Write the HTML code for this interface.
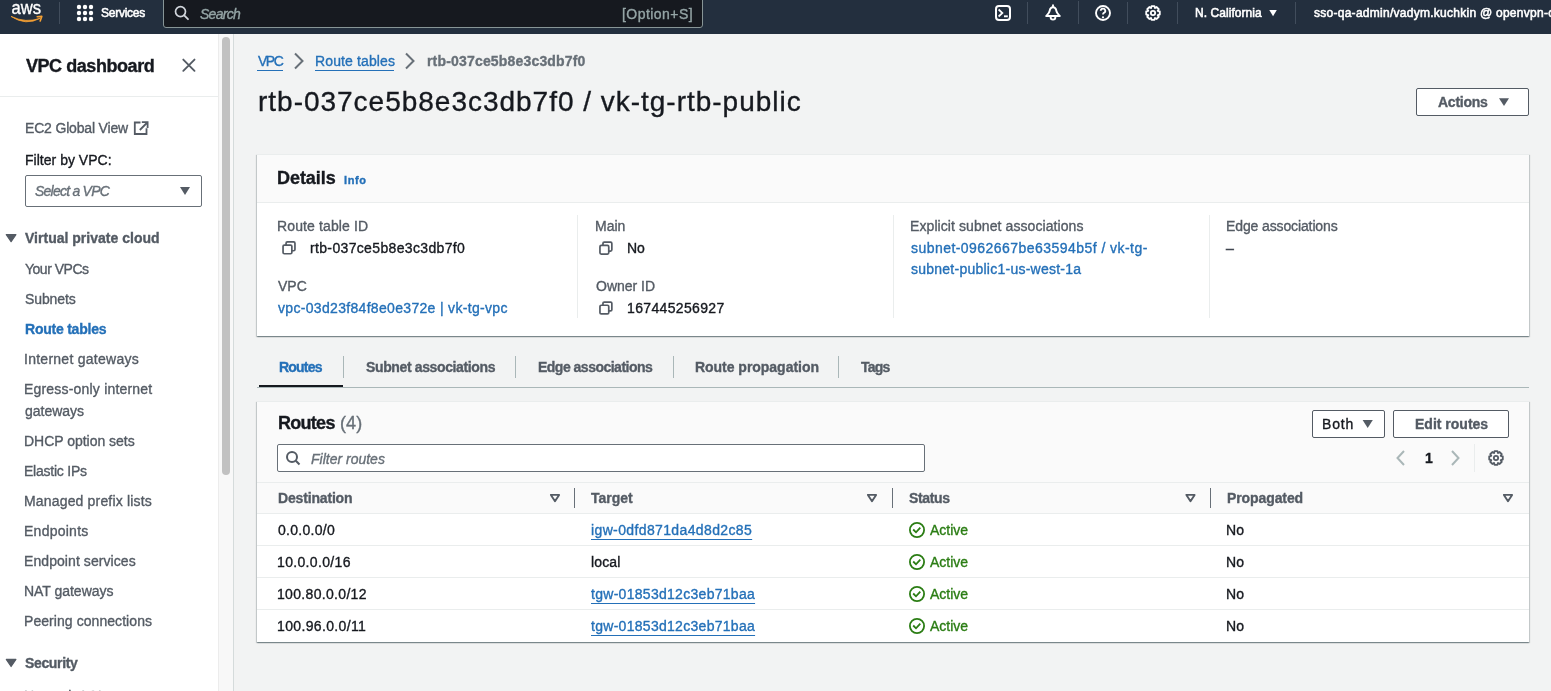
<!DOCTYPE html>
<html><head><meta charset="utf-8">
<style>
html,body{margin:0;padding:0;width:1551px;height:691px;overflow:hidden;background:#f2f3f3;font-family:"Liberation Sans",sans-serif;}
.t{position:absolute;line-height:0;white-space:nowrap;will-change:transform;-webkit-text-stroke:0.35px currentColor;}
.a{position:absolute;box-sizing:border-box;}
svg{position:absolute;overflow:visible;}
</style></head><body>
<!-- header -->
<div class="a" style="left:0;top:0;width:1551px;height:34px;background:#232f3e"></div>
<!-- aws logo -->
<svg style="left:0;top:0;will-change:transform" width="60" height="34">
  <text x="11.6" y="14" font-family="Liberation Sans" font-size="18.6" fill="#fff" stroke="#fff" stroke-width="0.35" textLength="29.6" lengthAdjust="spacingAndGlyphs">aws</text>
  <path d="M11 16.4 Q26 26.2 40.2 18.3 Q26 23.4 11 16.4 Z" fill="#f5a033" stroke="#f5a033" stroke-width="0.8" stroke-linejoin="round"/>
  <path d="M37.2 16.8 L41.8 16.4 L40.2 20.9" stroke="#f5a033" stroke-width="1.6" fill="none" stroke-linecap="round" stroke-linejoin="round"/>
</svg>
<div class="a" style="left:59px;top:2px;width:1px;height:22px;background:#414d5c"></div>
<!-- grid dots -->
<svg style="left:0;top:0" width="100" height="34" fill="#fff">
  <circle cx="79" cy="7" r="2.2"/><circle cx="85" cy="7" r="2.2"/><circle cx="91" cy="7" r="2.2"/>
  <circle cx="79" cy="13" r="2.2"/><circle cx="85" cy="13" r="2.2"/><circle cx="91" cy="13" r="2.2"/>
  <circle cx="79" cy="19" r="2.2"/><circle cx="85" cy="19" r="2.2"/><circle cx="91" cy="19" r="2.2"/>
</svg>
<!-- search -->
<div class="a" style="left:163px;top:-6px;width:540px;height:34px;background:#16191f;border:1px solid #879596;border-radius:3px"></div>
<svg style="left:0;top:0" width="200" height="34">
  <circle cx="180.5" cy="11.6" r="5" stroke="#d1d5db" stroke-width="1.7" fill="none"/>
  <path d="M184.2 15.3 L188 19.2" stroke="#d1d5db" stroke-width="1.8" stroke-linecap="round"/>
</svg>
<!-- header right icons -->
<svg style="left:0;top:0" width="1300" height="34" fill="none" stroke="#fff" stroke-width="2">
  <rect x="996" y="6" width="14" height="14" rx="3"/>
  <path d="M998.6 9.5 L1002.4 13 L998.6 16.5" stroke-width="1.7"/>
  <path d="M1004 16.3 L1007.8 16.3" stroke-width="1.9"/>
  <!-- bell -->
  <path d="M1053 7.2 C1050.8 7.2 1049.9 9 1049.6 11 C1049.3 13 1047.8 14.3 1046.2 16 L1059.8 16 C1058.2 14.3 1056.7 13 1056.4 11 C1056.1 9 1055.2 7.2 1053 7.2 Z" stroke-width="1.9" stroke-linejoin="round"/>
  <path d="M1053 5.2 L1053 7" stroke-width="1.9" stroke-linecap="round"/>
  <path d="M1050.6 17 A2.4 2.6 0 0 0 1055.4 17" stroke-width="1.9"/>
  <!-- help -->
  <circle cx="1103" cy="13" r="7" stroke-width="1.9"/>
  <path d="M1100.7 10.8 A2.3 2.2 0 1 1 1103.9 12.9 C1103.2 13.3 1103 13.8 1103 14.6" stroke-width="1.8"/>
  <circle cx="1103" cy="17.3" r="1.1" fill="#fff" stroke="none"/>
  <!-- gear -->
  <g transform="translate(1153,13) scale(0.9) translate(-1153,-13)">
  <circle cx="1153" cy="13" r="2.4" stroke-width="2"/>
  <path d="M1151.4 5.4 L1154.6 5.4 L1155.2 7.5 L1157.1 6.4 L1159.4 8.7 L1158.3 10.6 L1160.5 11.3 L1160.5 14.7 L1158.3 15.4 L1159.4 17.3 L1157.1 19.6 L1155.2 18.5 L1154.6 20.6 L1151.4 20.6 L1150.8 18.5 L1148.9 19.6 L1146.6 17.3 L1147.7 15.4 L1145.5 14.7 L1145.5 11.3 L1147.7 10.6 L1146.6 8.7 L1148.9 6.4 L1150.8 7.5 Z" stroke-width="2.1" stroke-linejoin="round"/>
</g>
</svg>
<div class="a" style="left:1027px;top:2px;width:1px;height:22px;background:#414d5c"></div>
<div class="a" style="left:1078px;top:1px;width:1px;height:23px;background:#414d5c"></div>
<div class="a" style="left:1127px;top:2px;width:1px;height:22px;background:#414d5c"></div>
<div class="a" style="left:1177px;top:2px;width:1px;height:22px;background:#414d5c"></div>
<div class="a" style="left:1295px;top:2px;width:1px;height:22px;background:#414d5c"></div>
<svg style="left:0;top:0" width="1300" height="34"><path d="M1269.3 10 L1276.8 10 L1273.05 16.2 Z" fill="#fff"/></svg>

<!-- sidebar -->
<div class="a" style="left:0;top:34px;width:218px;height:657px;background:#fff"></div>
<div class="a" style="left:0;top:96px;width:218px;height:1px;background:#eaeded"></div>
<!-- scrollbar -->
<div class="a" style="left:218px;top:34px;width:15px;height:657px;background:#f8f8f8;border-left:1px solid #ececec"></div>
<div class="a" style="left:222px;top:37px;width:8px;height:438px;background:#c1c1c1;border-radius:4px"></div>
<div class="a" style="left:233px;top:34px;width:1px;height:657px;background:#d5dbdb"></div>
<!-- close X -->
<svg style="left:0;top:0" width="220" height="100"><path d="M183.3 59.6 L194.5 70.8 M194.5 59.6 L183.3 70.8" stroke="#545b64" stroke-width="1.9" stroke-linecap="round"/></svg>
<!-- external link icon -->
<svg style="left:0;top:0" width="220" height="160" fill="none" stroke="#545b64" stroke-width="1.8">
  <path d="M140.5 122.5 L134.8 122.5 L134.8 134 L146.5 134 L146.5 128.3"/>
  <path d="M141.8 122.2 L147.6 122.2 L147.6 128 M147.3 122.5 L139.8 130"/>
</svg>
<!-- select -->
<div class="a" style="left:25px;top:175px;width:177px;height:32px;background:#fff;border:1px solid #687078;border-radius:2px"></div>
<svg style="left:0;top:0" width="220" height="260" fill="#545b64">
  <path d="M180 187 L190 187 L185 195 Z"/>
  <path d="M6.3 234.6 L15.9 234.6 L11.1 241.7 Z" stroke="#545b64" stroke-width="1.2" stroke-linejoin="round"/>
</svg>
<svg style="left:0;top:0" width="220" height="700" fill="#545b64"><path d="M6.3 659.4 L15.9 659.4 L11.1 666.5 Z" stroke="#545b64" stroke-width="1.2" stroke-linejoin="round"/></svg>

<!-- breadcrumb chevrons -->
<svg style="left:0;top:0" width="500" height="80" fill="none" stroke="#687078" stroke-width="2">
  <path d="M295 53.5 L302.5 61 L295 68.5"/>
  <path d="M406 53.5 L413.5 61 L406 68.5"/>
</svg>
<div class="a" style="left:257px;top:70px;width:26px;height:1px;background:#2470b8"></div>
<div class="a" style="left:315px;top:70px;width:79px;height:1px;background:#2470b8"></div>

<!-- actions button -->
<div class="a" style="left:1416px;top:88px;width:113px;height:28px;border:1px solid #545b64;border-radius:2px;background:#fff"></div>
<svg style="left:0;top:0" width="1551" height="120" fill="#545b64"><path d="M1499 98.3 L1509 98.3 L1504 106 Z"/></svg>

<!-- details container -->
<div class="a" style="left:257px;top:154px;width:1272px;height:182px;background:#fff;border-top:1px solid #eaeded;box-shadow:0 1px 1px 0 rgba(0,28,36,.3),1px 1px 1px 0 rgba(0,28,36,.15),-1px 1px 1px 0 rgba(0,28,36,.15)"></div>
<div class="a" style="left:257px;top:155px;width:1272px;height:48px;background:#fafafa;border-bottom:1px solid #eaeded"></div>
<div class="a" style="left:577px;top:215px;width:1px;height:103px;background:#eaeded"></div>
<div class="a" style="left:893px;top:215px;width:1px;height:103px;background:#eaeded"></div>
<div class="a" style="left:1209px;top:215px;width:1px;height:103px;background:#eaeded"></div>
<!-- copy icons -->
<svg style="left:0;top:0" width="800" height="340" fill="none" stroke="#545b64" stroke-width="1.7" stroke-linejoin="round">
  <g transform="translate(282.6,241)"><rect x="0.45" y="4.05" width="8.8" height="8.7" rx="1.3"/><path d="M3.45 4.05 V2.15 Q3.45 0.85 4.75 0.85 H11.05 Q12.35 0.85 12.35 2.15 V8.45 Q12.35 9.75 11.05 9.75 H9.25"/></g>
  <g transform="translate(599.5,241.3)"><rect x="0.45" y="4.05" width="8.8" height="8.7" rx="1.3"/><path d="M3.45 4.05 V2.15 Q3.45 0.85 4.75 0.85 H11.05 Q12.35 0.85 12.35 2.15 V8.45 Q12.35 9.75 11.05 9.75 H9.25"/></g>
  <g transform="translate(599.5,301.2)"><rect x="0.45" y="4.05" width="8.8" height="8.7" rx="1.3"/><path d="M3.45 4.05 V2.15 Q3.45 0.85 4.75 0.85 H11.05 Q12.35 0.85 12.35 2.15 V8.45 Q12.35 9.75 11.05 9.75 H9.25"/></g>
</svg>

<!-- tabs -->
<div class="a" style="left:257px;top:387px;width:1272px;height:1px;background:#aab7b8"></div>
<div class="a" style="left:259px;top:385px;width:84px;height:2px;background:#16191f"></div>
<div class="a" style="left:343px;top:356px;width:1px;height:22px;background:#aab7b8"></div>
<div class="a" style="left:515px;top:356px;width:1px;height:22px;background:#aab7b8"></div>
<div class="a" style="left:673px;top:356px;width:1px;height:22px;background:#aab7b8"></div>
<div class="a" style="left:838px;top:356px;width:1px;height:22px;background:#aab7b8"></div>

<!-- routes container -->
<div class="a" style="left:257px;top:401px;width:1272px;height:241px;background:#fafafa;border-top:1px solid #eaeded;box-shadow:0 1px 1px 0 rgba(0,28,36,.3),1px 1px 1px 0 rgba(0,28,36,.15),-1px 1px 1px 0 rgba(0,28,36,.15)"></div>
<div class="a" style="left:1312px;top:410px;width:73px;height:28px;border:1px solid #545b64;border-radius:2px;background:#fff"></div>
<div class="a" style="left:1393px;top:410px;width:116px;height:28px;border:1px solid #545b64;border-radius:2px;background:#fff"></div>
<svg style="left:0;top:0" width="1551" height="500" fill="#545b64"><path d="M1362.6 419.9 L1372.8 419.9 L1367.7 427.9 Z"/></svg>
<div class="a" style="left:277px;top:444px;width:648px;height:28px;border:1px solid #687078;border-radius:2px;background:#fff"></div>
<svg style="left:0;top:0" width="1551" height="500" fill="none" stroke="#545b64" stroke-width="2">
  <circle cx="292" cy="457" r="5"/><path d="M295.8 460.8 L299.5 464.5"/>
  <path d="M1404 451 L1397.5 458 L1404 465" stroke="#aab7b8"/>
  <path d="M1452 451 L1458.5 458 L1452 465" stroke="#aab7b8"/>
</svg>
<div class="a" style="left:1474px;top:444px;width:1px;height:28px;background:#eaeded"></div>
<svg style="left:0;top:0" width="1551" height="500" fill="none" stroke="#545b64">
  <g transform="translate(1496,458) scale(0.9) translate(-1496,-458)"><circle cx="1496" cy="458" r="2.4" stroke-width="2"/>
  <path d="M1494.4 450.4 L1497.6 450.4 L1498.2 452.5 L1500.1 451.4 L1502.4 453.7 L1501.3 455.6 L1503.5 456.3 L1503.5 459.7 L1501.3 460.4 L1502.4 462.3 L1500.1 464.6 L1498.2 463.5 L1497.6 465.6 L1494.4 465.6 L1493.8 463.5 L1491.9 464.6 L1489.6 462.3 L1490.7 460.4 L1488.5 459.7 L1488.5 456.3 L1490.7 455.6 L1489.6 453.7 L1491.9 451.4 L1493.8 452.5 Z" stroke-width="2.1" stroke-linejoin="round"/>
</g>
</svg>
<!-- table -->
<div class="a" style="left:257px;top:482px;width:1272px;height:1px;background:#eaeded"></div>
<div class="a" style="left:257px;top:513px;width:1272px;height:129px;background:#fff;border-top:1px solid #eaeded"></div>
<div class="a" style="left:257px;top:545px;width:1272px;height:1px;background:#eaeded"></div>
<div class="a" style="left:257px;top:577px;width:1272px;height:1px;background:#eaeded"></div>
<div class="a" style="left:257px;top:609px;width:1272px;height:1px;background:#eaeded"></div>
<div class="a" style="left:574px;top:488px;width:1px;height:20px;background:#687078"></div>
<div class="a" style="left:892px;top:488px;width:1px;height:20px;background:#687078"></div>
<div class="a" style="left:1210px;top:488px;width:1px;height:20px;background:#687078"></div>
<svg style="left:0;top:0" width="1551" height="700" fill="none" stroke="#545b64" stroke-width="1.9" stroke-linejoin="round">
  <path d="M550.9 494.9 L559.1 494.9 L555 501.2 Z"/>
  <path d="M867.9 494.9 L876.1 494.9 L872 501.2 Z"/>
  <path d="M1186.4 494.9 L1194.6 494.9 L1190.5 501.2 Z"/>
  <path d="M1503.9 494.9 L1512.1 494.9 L1508 501.2 Z"/>
</svg>
<svg style="left:0;top:0" width="1551" height="700" fill="none" stroke="#2b7d14" stroke-width="1.8">
  <g transform="translate(909,522)"><circle cx="8" cy="8" r="7.1"/><path d="M4.2 7.5 L7 10.3 L11.3 5.6" /></g>
  <g transform="translate(909,554)"><circle cx="8" cy="8" r="7.1"/><path d="M4.2 7.5 L7 10.3 L11.3 5.6" /></g>
  <g transform="translate(909,586)"><circle cx="8" cy="8" r="7.1"/><path d="M4.2 7.5 L7 10.3 L11.3 5.6" /></g>
  <g transform="translate(909,618)"><circle cx="8" cy="8" r="7.1"/><path d="M4.2 7.5 L7 10.3 L11.3 5.6" /></g>
</svg>

<div class="t" style="left:101.0px;top:12.94px;font-size:12px;color:#ffffff;letter-spacing:-0.245px;-webkit-text-stroke:0.55px #fff">Services</div>
<div class="t" style="left:199.7px;top:14.15px;font-size:14px;color:#95a5a6;font-style:italic;letter-spacing:-0.714px;">Search</div>
<div class="t" style="left:622.4px;top:14.15px;font-size:14px;color:#95a5a6;letter-spacing:0.461px;">[Option+S]</div>
<div class="t" style="left:1195.0px;top:12.94px;font-size:12px;color:#ffffff;letter-spacing:0.054px;-webkit-text-stroke:0.55px #fff">N. California</div>
<div class="t" style="left:1313.6px;top:12.94px;font-size:12px;color:#ffffff;letter-spacing:0.267px;-webkit-text-stroke:0.55px #fff">sso-qa-admin/vadym.kuchkin @ openvpn-corp-qa</div>
<div class="t" style="left:25.7px;top:65.56px;font-size:18px;font-weight:700;color:#16191f;letter-spacing:-0.444px;">VPC dashboard</div>
<div class="t" style="left:25.2px;top:128.15px;font-size:14px;color:#545b64;letter-spacing:-0.176px;">EC2 Global View</div>
<div class="t" style="left:25.2px;top:160.05px;font-size:14px;color:#16191f;letter-spacing:0.018px;">Filter by VPC:</div>
<div class="t" style="left:35.0px;top:190.65px;font-size:14px;color:#687078;font-style:italic;letter-spacing:-0.768px;">Select a VPC</div>
<div class="t" style="left:25.2px;top:238.45px;font-size:14px;font-weight:700;color:#545b64;letter-spacing:0.011px;">Virtual private cloud</div>
<div class="t" style="left:25.0px;top:269.45px;font-size:14px;color:#545b64;letter-spacing:-0.495px;">Your VPCs</div>
<div class="t" style="left:25.0px;top:299.15px;font-size:14px;color:#545b64;letter-spacing:-0.112px;">Subnets</div>
<div class="t" style="left:24.0px;top:359.15px;font-size:14px;color:#545b64;letter-spacing:0.262px;">Internet gateways</div>
<div class="t" style="left:24.0px;top:389.15px;font-size:14px;color:#545b64;letter-spacing:0.194px;">Egress-only internet</div>
<div class="t" style="left:25.0px;top:411.15px;font-size:14px;color:#545b64;letter-spacing:-0.021px;">gateways</div>
<div class="t" style="left:24.0px;top:441.15px;font-size:14px;color:#545b64;letter-spacing:-0.018px;">DHCP option sets</div>
<div class="t" style="left:24.0px;top:470.85px;font-size:14px;color:#545b64;letter-spacing:-0.235px;">Elastic IPs</div>
<div class="t" style="left:24.0px;top:500.85px;font-size:14px;color:#545b64;letter-spacing:0.168px;">Managed prefix lists</div>
<div class="t" style="left:24.0px;top:530.85px;font-size:14px;color:#545b64;letter-spacing:0.254px;">Endpoints</div>
<div class="t" style="left:24.0px;top:560.85px;font-size:14px;color:#545b64;letter-spacing:0.075px;">Endpoint services</div>
<div class="t" style="left:24.0px;top:590.85px;font-size:14px;color:#545b64;letter-spacing:-0.027px;">NAT gateways</div>
<div class="t" style="left:24.0px;top:620.85px;font-size:14px;color:#545b64;letter-spacing:0.063px;">Peering connections</div>
<div class="t" style="left:24.0px;top:695.55px;font-size:14px;color:#545b64;">Network ACLs</div>
<div class="t" style="left:25.0px;top:329.15px;font-size:14px;font-weight:700;color:#2470b8;letter-spacing:-0.230px;">Route tables</div>
<div class="t" style="left:25.0px;top:663.45px;font-size:14px;font-weight:700;color:#545b64;letter-spacing:-0.352px;">Security</div>
<div class="t" style="left:257.7px;top:61.15px;font-size:14px;color:#2470b8;letter-spacing:-1.488px;">VPC</div>
<div class="t" style="left:314.7px;top:61.15px;font-size:14px;color:#2470b8;letter-spacing:0.127px;">Route tables</div>
<div class="t" style="left:427.4px;top:61.15px;font-size:14px;font-weight:700;color:#687078;letter-spacing:0.176px;">rtb-037ce5b8e3c3db7f0</div>
<div class="t" style="left:258.3px;top:102.10px;font-size:28px;color:#16191f;letter-spacing:0.985px;">rtb-037ce5b8e3c3db7f0 / vk-tg-rtb-public</div>
<div class="t" style="left:1438.0px;top:102.15px;font-size:14px;font-weight:700;color:#545b64;letter-spacing:-0.259px;">Actions</div>
<div class="t" style="left:277.0px;top:177.76px;font-size:18px;font-weight:700;color:#16191f;letter-spacing:-0.053px;">Details</div>
<div class="t" style="left:344.3px;top:180.09px;font-size:11px;font-weight:700;color:#2470b8;letter-spacing:0.621px;">Info</div>
<div class="t" style="left:277.0px;top:226.35px;font-size:14px;color:#545b64;letter-spacing:0.124px;">Route table ID</div>
<div class="t" style="left:310.0px;top:247.85px;font-size:14px;color:#16191f;letter-spacing:0.345px;">rtb-037ce5b8e3c3db7f0</div>
<div class="t" style="left:278.0px;top:286.15px;font-size:14px;color:#545b64;">VPC</div>
<div class="t" style="left:278.0px;top:307.85px;font-size:14px;color:#2470b8;letter-spacing:0.318px;">vpc-03d23f84f8e0e372e | vk-tg-vpc</div>
<div class="t" style="left:594.5px;top:226.35px;font-size:14px;color:#545b64;">Main</div>
<div class="t" style="left:626.5px;top:247.85px;font-size:14px;color:#16191f;">No</div>
<div class="t" style="left:595.5px;top:286.15px;font-size:14px;color:#545b64;">Owner ID</div>
<div class="t" style="left:626.6px;top:307.85px;font-size:14px;color:#16191f;letter-spacing:0.341px;">167445256927</div>
<div class="t" style="left:909.7px;top:226.35px;font-size:14px;color:#545b64;letter-spacing:0.085px;">Explicit subnet associations</div>
<div class="t" style="left:910.7px;top:247.85px;font-size:14px;color:#2470b8;letter-spacing:0.454px;">subnet-0962667be63594b5f / vk-tg-</div>
<div class="t" style="left:910.7px;top:269.45px;font-size:14px;color:#2470b8;letter-spacing:0.246px;">subnet-public1-us-west-1a</div>
<div class="t" style="left:1226.0px;top:226.35px;font-size:14px;color:#545b64;letter-spacing:-0.120px;">Edge associations</div>
<div class="t" style="left:1226.3px;top:247.85px;font-size:14px;color:#414750;letter-spacing:-0.800px;-webkit-text-stroke:0.6px #414750">–</div>
<div class="t" style="left:279.4px;top:367.45px;font-size:14px;font-weight:700;color:#2470b8;letter-spacing:-0.792px;">Routes</div>
<div class="t" style="left:365.7px;top:367.45px;font-size:14px;font-weight:700;color:#545b64;letter-spacing:-0.370px;">Subnet associations</div>
<div class="t" style="left:537.7px;top:367.45px;font-size:14px;font-weight:700;color:#545b64;letter-spacing:-0.509px;">Edge associations</div>
<div class="t" style="left:695.0px;top:367.45px;font-size:14px;font-weight:700;color:#545b64;letter-spacing:-0.030px;">Route propagation</div>
<div class="t" style="left:861.0px;top:367.45px;font-size:14px;font-weight:700;color:#545b64;letter-spacing:-0.817px;">Tags</div>
<div class="t" style="left:277.7px;top:423.46px;font-size:18px;font-weight:700;color:#16191f;letter-spacing:-0.719px;">Routes</div>
<div class="t" style="left:339.5px;top:423.46px;font-size:18px;color:#687078;letter-spacing:0.098px;">(4)</div>
<div class="t" style="left:1321.7px;top:423.85px;font-size:14px;color:#16191f;letter-spacing:0.795px;">Both</div>
<div class="t" style="left:1414.7px;top:423.85px;font-size:14px;font-weight:700;color:#545b64;">Edit routes</div>
<div class="t" style="left:310.7px;top:458.65px;font-size:14px;color:#687078;font-style:italic;">Filter routes</div>
<div class="t" style="left:1425.3px;top:457.85px;font-size:14px;font-weight:700;color:#16191f;">1</div>
<div class="t" style="left:278.0px;top:498.45px;font-size:14px;font-weight:700;color:#545b64;letter-spacing:-0.168px;">Destination</div>
<div class="t" style="left:591.0px;top:498.45px;font-size:14px;font-weight:700;color:#545b64;letter-spacing:-0.017px;">Target</div>
<div class="t" style="left:908.7px;top:498.45px;font-size:14px;font-weight:700;color:#545b64;letter-spacing:-0.340px;">Status</div>
<div class="t" style="left:1227.4px;top:498.45px;font-size:14px;font-weight:700;color:#545b64;letter-spacing:-0.096px;">Propagated</div>
<div class="t" style="left:278.0px;top:530.15px;font-size:14px;color:#16191f;letter-spacing:0.287px;">0.0.0.0/0</div>
<div class="t" style="left:590.9px;top:530.15px;font-size:14px;color:#2470b8;letter-spacing:0.372px;text-decoration:underline;text-underline-offset:4px">igw-0dfd871da4d8d2c85</div>
<div class="t" style="left:929.7px;top:530.15px;font-size:14px;color:#2b7d14;">Active</div>
<div class="t" style="left:1226.4px;top:530.15px;font-size:14px;color:#16191f;letter-spacing:0.190px;">No</div>
<div class="t" style="left:277.0px;top:562.15px;font-size:14px;color:#16191f;letter-spacing:0.342px;">10.0.0.0/16</div>
<div class="t" style="left:590.9px;top:562.15px;font-size:14px;color:#16191f;letter-spacing:0.154px;">local</div>
<div class="t" style="left:929.7px;top:562.15px;font-size:14px;color:#2b7d14;">Active</div>
<div class="t" style="left:1226.4px;top:562.15px;font-size:14px;color:#16191f;letter-spacing:0.190px;">No</div>
<div class="t" style="left:277.0px;top:594.15px;font-size:14px;color:#16191f;letter-spacing:0.321px;">100.80.0.0/12</div>
<div class="t" style="left:590.9px;top:594.15px;font-size:14px;color:#2470b8;letter-spacing:0.288px;text-decoration:underline;text-underline-offset:4px">tgw-01853d12c3eb71baa</div>
<div class="t" style="left:929.7px;top:594.15px;font-size:14px;color:#2b7d14;">Active</div>
<div class="t" style="left:1226.4px;top:594.15px;font-size:14px;color:#16191f;letter-spacing:0.190px;">No</div>
<div class="t" style="left:277.0px;top:626.15px;font-size:14px;color:#16191f;letter-spacing:0.349px;">100.96.0.0/11</div>
<div class="t" style="left:590.9px;top:626.15px;font-size:14px;color:#2470b8;letter-spacing:0.288px;text-decoration:underline;text-underline-offset:4px">tgw-01853d12c3eb71baa</div>
<div class="t" style="left:929.7px;top:626.15px;font-size:14px;color:#2b7d14;">Active</div>
<div class="t" style="left:1226.4px;top:626.15px;font-size:14px;color:#16191f;letter-spacing:0.190px;">No</div>
</body></html>
